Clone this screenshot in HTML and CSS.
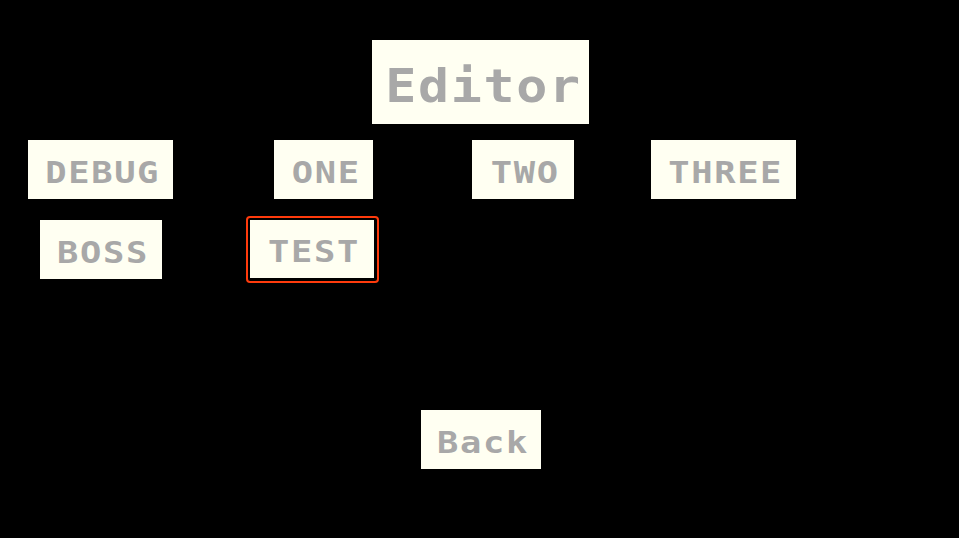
FILE: index.html
```html
<!DOCTYPE html>
<html lang="en">

<head>
    <meta charset="UTF-8">
    <meta name="viewport" content="width=device-width, initial-scale=1.0">
    <title>Editor</title>
    <link rel="stylesheet" href="styles.css">
</head>

<body>
    <div id="screen">

        <div id="titleRow">
            <div id="title" class="panel"><span class="label">Editor</span></div>
        </div>

        <!-- Level buttons -->
        <div class="levelRow" id="rowOne">
            <button class="panel level" id="debug"><span class="label">DEBUG</span></button>
            <button class="panel level" id="one"><span class="label">ONE</span></button>
            <button class="panel level" id="two"><span class="label">TWO</span></button>
            <button class="panel level" id="three"><span class="label">THREE</span></button>
        </div>

        <div class="levelRow" id="rowTwo">
            <button class="panel level" id="boss"><span class="label">BOSS</span></button>
            <div id="focusRing">
                <button class="panel level" id="test"><span class="label">TEST</span></button>
            </div>
        </div>

        <div id="backRow">
            <button class="panel level" id="back"><span class="label">Back</span></button>
        </div>

    </div>
</body>

</html>
```

FILE: styles.css
```css
body {
    margin: 0;
    background-color: black;
    font-family: "DejaVu Sans Mono", "Liberation Mono", monospace;
    font-weight: bold;
}

#screen {
    width: 959px;
    height: 538px;
    overflow: hidden;
}

.panel {
    background-color: #fffff2;
    color: #a8a8a8;
    border: none;
    padding: 0;
    margin: 0;
    font-family: inherit;
    font-weight: bold;
    display: flex;
    justify-content: center;
    align-items: center;
    box-sizing: border-box;
}

/* the pixel font is wider than any installed mono, so stretch it */
.label {
    display: inline-block;
    letter-spacing: 1.4px;
    margin-right: -1.4px;
    transform: scaleX(1.18);
}

#titleRow {
    display: flex;
    justify-content: center;
    padding-top: 40px;
    padding-left: 2px;
}

#title {
    width: 217px;
    height: 84px;
    font-size: 46.5px;
    padding: 8px 0 0 4px;
}

#title .label {
    letter-spacing: 1.5px;
    margin-right: -1.5px;
    transform: scaleX(1.11);
}

.levelRow {
    display: flex;
    align-items: center;
}

.level {
    height: 59px;
    font-size: 30px;
    padding: 5px 0 0 3px;
}

#rowOne {
    margin-top: 16px;
    padding-left: 28px;
}

#debug {
    width: 145px;
}

#one {
    width: 99px;
    margin-left: 101px;
}

#two {
    width: 102px;
    margin-left: 99px;
}

#three {
    width: 145px;
    margin-left: 77px;
}

#rowTwo {
    margin-top: 17px;
    padding-left: 40px;
}

#boss {
    width: 122px;
}

#focusRing {
    margin-left: 84px;
    border: 2px solid #ff3b0c;
    border-radius: 4px;
    padding: 2px 3px 3px 2px;
    background-color: black;
}

#test {
    width: 124px;
    height: 58px;
}

#backRow {
    display: flex;
    justify-content: center;
    padding-left: 3px;
    margin-top: 127px;
}

#back {
    width: 120px;
}
```
